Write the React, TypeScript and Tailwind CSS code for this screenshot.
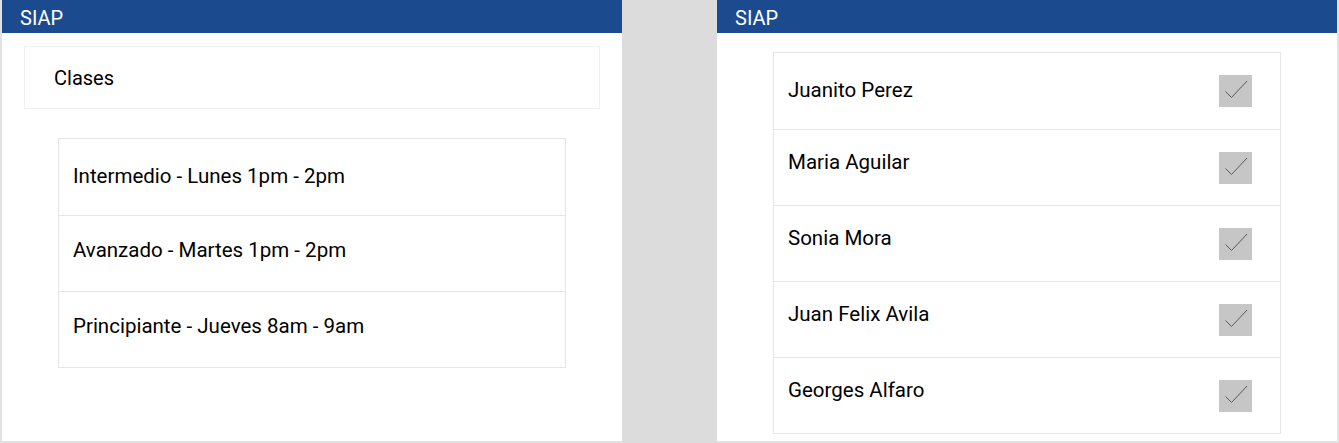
const clases = [
  'Intermedio - Lunes 1pm - 2pm',
  'Avanzado - Martes 1pm - 2pm',
  'Principiante - Jueves 8am - 9am',
];

const alumnos = ['Juanito Perez', 'Maria Aguilar', 'Sonia Mora', 'Juan Felix Avila', 'Georges Alfaro'];

function Header() {
  return (
    <div className="h-[33px] bg-[#1b4a8e] flex items-center px-[18px] pt-[2px] text-[20px] text-white">
      SIAP
    </div>
  );
}

function CheckBox() {
  return (
    <div className="w-[33px] h-[32px] bg-[#c6c6c6] flex items-center justify-center">
      <svg width="33" height="32" viewBox="0 0 33 32" fill="none">
        <path d="M6.5 16.5 L12.5 22.5 L28 6" stroke="#5a5a5a" strokeWidth="1" />
      </svg>
    </div>
  );
}

export default function App() {
  return (
    <div
      className="w-[1339px] h-[443px] bg-[#dcdcdc] flex justify-between text-black"
      style={{ fontFamily: 'Roboto, "Noto Sans", sans-serif' }}
    >
      {/* Clases */}
      <div className="w-[622px] h-full bg-white border-l-2 border-b-2 border-[#e2e2e2] flex flex-col">
        <Header />
        <div className="mx-[22px] mt-[13px] h-[63px] border border-[#f0f0f0] flex items-center pl-[29px] text-[20px]">
          Clases
        </div>
        <div className="mx-[56px] mt-[29px] border border-[#e6e6e6]">
          {clases.map((c, i) => (
            <div
              key={c}
              className={`h-[76px] flex items-center pl-[14px] text-[20.5px] ${i > 0 ? 'border-t border-[#e6e6e6] pb-[7px]' : 'pb-[1px]'}`}
            >
              {c}
            </div>
          ))}
        </div>
      </div>

      {/* Alumnos */}
      <div className="w-[622px] h-full bg-white border-r-2 border-b-2 border-[#e2e2e2] flex flex-col">
        <Header />
        <div className="mx-[56px] mt-[19px] border border-[#e6e6e6]">
          {alumnos.map((a, i) => (
            <div
              key={a}
              className={`h-[76px] flex items-center justify-between pl-[14px] pr-[28px] text-[20.5px] ${i > 0 ? 'border-t border-[#e6e6e6]' : ''}`}
            >
              <span className={i > 0 ? 'pb-[10px]' : 'pb-[1px]'}>{a}</span>
              <CheckBox />
            </div>
          ))}
        </div>
      </div>
    </div>
  );
}
